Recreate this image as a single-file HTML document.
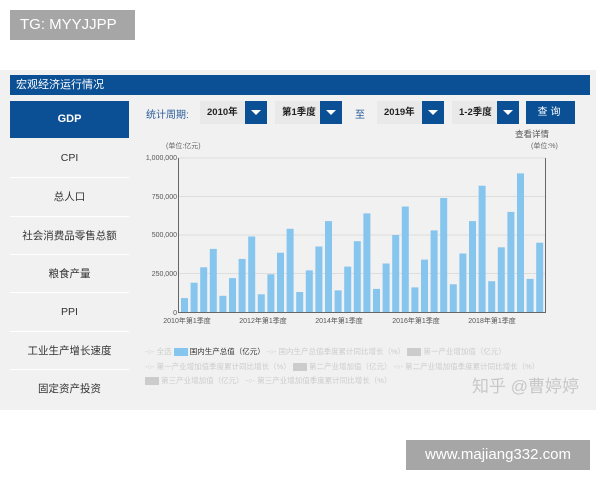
<!DOCTYPE html>
<html><head><meta charset="utf-8"><style>
body{margin:0;width:600px;height:480px;background:#fff;position:relative;overflow:hidden;font-family:"Liberation Sans","Noto Sans CJK SC",sans-serif}
.a{position:absolute}
.panel{left:0;top:70px;width:596px;height:340px;background:#f1f1f1}
.title{left:10px;top:75px;width:580px;height:20px;background:#0b4f95;color:#fff;font-size:11px;line-height:20px;text-indent:6px}
.gdp{left:10px;top:101px;width:119px;height:37px;background:#0b4f95;color:#fff;font-size:11px;font-weight:bold;text-align:center;line-height:37px}
.it{left:10px;width:119px;height:38px;text-align:center;line-height:38px;font-size:10.5px;color:#333;border-top:1px solid #fff}
.sel{height:23px;top:101px;background:#e9e9e9;font-size:9.5px;font-weight:bold;color:#222;line-height:23px;text-indent:7px}
.dd{top:101px;width:22px;height:23px;background:#0b4f95}
.dd:after{content:"";position:absolute;left:6px;top:9px;border-left:5px solid transparent;border-right:5px solid transparent;border-top:5px solid #fff}
.wm{background:#a6a6a6;color:#fff;font-size:15px}
.lg{font-size:7.5px;color:#ccc}
</style></head><body>
<div class="a wm" style="left:10px;top:10px;width:125px;height:30px;line-height:30px;text-indent:10px">TG: MYYJJPP</div>
<div class="a panel"></div>
<div class="a title">宏观经济运行情况</div>
<div class="a gdp">GDP</div>
<div class="a it" style="top:139px;border-top:none">CPI</div>
<div class="a it" style="top:177px">总人口</div>
<div class="a it" style="top:216px">社会消费品零售总额</div>
<div class="a it" style="top:254px">粮食产量</div>
<div class="a it" style="top:292px">PPI</div>
<div class="a it" style="top:331px">工业生产增长速度</div>
<div class="a it" style="top:369px">固定资产投资</div>
<div class="a" style="left:146px;top:106px;font-size:10px;color:#2a5d9c">统计周期:</div>
<div class="a sel" style="left:200px;width:45px">2010年</div><div class="a dd" style="left:245px"></div>
<div class="a sel" style="left:275px;width:45px">第1季度</div><div class="a dd" style="left:320px"></div>
<div class="a" style="left:355px;top:106px;font-size:10px;color:#2a5d9c">至</div>
<div class="a sel" style="left:377px;width:45px">2019年</div><div class="a dd" style="left:422px"></div>
<div class="a sel" style="left:452px;width:45px">1-2季度</div><div class="a dd" style="left:497px"></div>
<div class="a" style="left:526px;top:101px;width:49px;height:23px;background:#0b4f95;color:#fff;font-size:10px;line-height:23px;text-align:center;letter-spacing:3px">查询</div>
<div class="a" style="left:515px;top:128px;font-size:8.5px;color:#555">查看详情</div>
<div class="a" style="left:531px;top:141px;font-size:7px;color:#666">(单位:%)</div>
<div class="a" style="left:166px;top:141px;font-size:7px;color:#666">(单位:亿元)</div>
<svg class="a" style="left:130px;top:145px" width="440" height="185" font-family="Liberation Sans,Noto Sans CJK SC,sans-serif" font-size="7" fill="#555">
<g stroke="#ddd" stroke-width="1"><line x1="48" y1="13" x2="416" y2="13"/><line x1="48" y1="51.5" x2="416" y2="51.5"/><line x1="48" y1="90" x2="416" y2="90"/><line x1="48" y1="128.5" x2="416" y2="128.5"/></g>
<g text-anchor="end"><text x="47" y="15">1,000,000</text><text x="47" y="54">750,000</text><text x="47" y="92">500,000</text><text x="47" y="131">250,000</text><text x="47" y="170">0</text></g>
<g fill="#86c5ee" id="b"></g>
<line x1="48.5" y1="13" x2="48.5" y2="167" stroke="#666"/><line x1="415.5" y1="13" x2="415.5" y2="167" stroke="#666"/>
<line x1="48" y1="167.5" x2="416" y2="167.5" stroke="#666"/>
<g text-anchor="middle"><text x="57" y="178">2010年第1季度</text><text x="133" y="178">2012年第1季度</text><text x="209" y="178">2014年第1季度</text><text x="286" y="178">2016年第1季度</text><text x="362" y="178">2018年第1季度</text></g>
</svg>
<div class="a lg" style="left:145px;top:346px">-○- 全选 <span style="display:inline-block;width:14px;height:8px;background:#86c5ee;vertical-align:middle"></span> <span style="color:#333">国内生产总值（亿元）</span> -○- 国内生产总值季度累计同比增长（%） <span style="display:inline-block;width:14px;height:8px;background:#ccc;vertical-align:middle"></span> 第一产业增加值（亿元）</div>
<div class="a lg" style="left:145px;top:361px">-○- 第一产业增加值季度累计同比增长（%） <span style="display:inline-block;width:14px;height:8px;background:#ccc;vertical-align:middle"></span> 第二产业增加值（亿元） -○- 第二产业增加值季度累计同比增长（%）</div>
<div class="a lg" style="left:145px;top:375px"><span style="display:inline-block;width:14px;height:8px;background:#ccc;vertical-align:middle"></span> 第三产业增加值（亿元） -○- 第三产业增加值季度累计同比增长（%）</div>
<div class="a" style="left:472px;top:372px;font-size:17px;color:#c8c8c8">知乎 @曹婷婷</div>
<div class="a wm" style="left:406px;top:440px;width:184px;height:30px;line-height:30px;text-align:center">www.majiang332.com</div>
<script>
var v=[90,190,290,410,105,220,345,490,115,245,385,540,130,270,425,590,140,295,460,640,150,315,500,685,160,340,530,740,180,380,590,820,200,420,650,900,215,450],s='';
v.forEach(function(x,i){var h=x*0.154;s+='<rect x="'+(51+i*9.6).toFixed(1)+'" y="'+(167-h).toFixed(1)+'" width="7" height="'+h.toFixed(1)+'"/>';});
document.getElementById('b').innerHTML=s;
</script>
</body></html>
